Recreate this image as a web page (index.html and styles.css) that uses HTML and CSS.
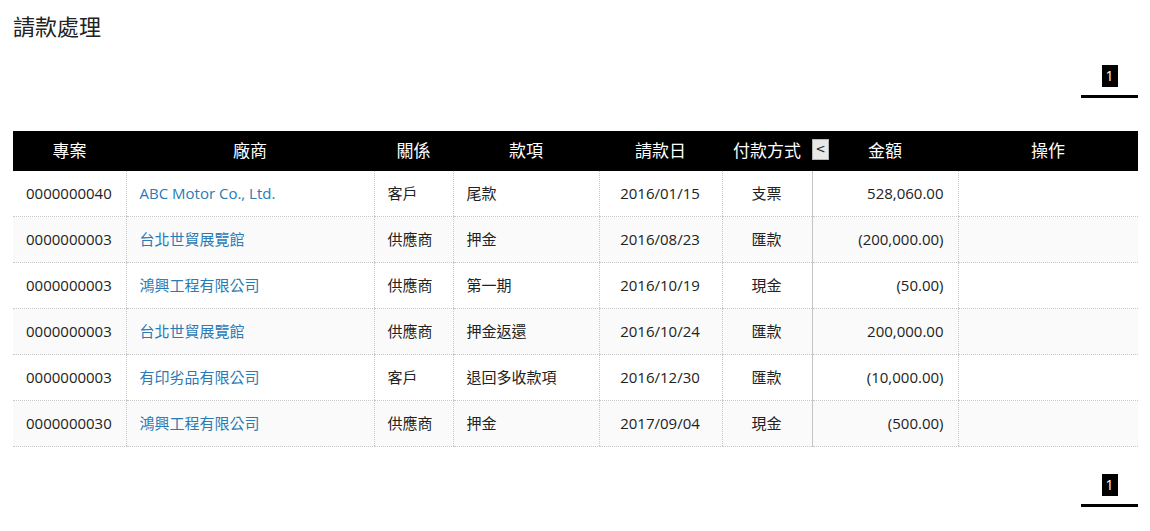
FILE: index.html
```html
<!DOCTYPE html>
<html lang="zh-Hant">
<head>
<meta charset="utf-8">
<title>請款處理</title>
<link rel="stylesheet" href="styles.css">
</head>
<body>
<h1 class="title">請款處理</h1>
<div class="pager-row"><div class="pager"><span class="page-num">1</span></div></div>
<table class="grid">
  <colgroup>
    <col class="c1"><col class="c2"><col class="c3"><col class="c4"><col class="c5"><col class="c6"><col class="c7"><col class="c8">
  </colgroup>
  <thead>
    <tr>
      <th>專案</th><th>廠商</th><th>關係</th><th>款項</th><th>請款日</th>
      <th class="th-pay">付款方式<span class="toggle">&lt;</span></th>
      <th>金額</th><th>操作</th>
    </tr>
  </thead>
  <tbody>
    <tr><td class="center">0000000040</td><td><a class="link">ABC Motor Co., Ltd.</a></td><td>客戶</td><td>尾款</td><td class="center">2016/01/15</td><td class="center">支票</td><td class="amt">528,060.00</td><td></td></tr>
    <tr><td class="center">0000000003</td><td><a class="link">台北世貿展覽館</a></td><td>供應商</td><td>押金</td><td class="center">2016/08/23</td><td class="center">匯款</td><td class="amt">(200,000.00)</td><td></td></tr>
    <tr><td class="center">0000000003</td><td><a class="link">鴻興工程有限公司</a></td><td>供應商</td><td>第一期</td><td class="center">2016/10/19</td><td class="center">現金</td><td class="amt">(50.00)</td><td></td></tr>
    <tr><td class="center">0000000003</td><td><a class="link">台北世貿展覽館</a></td><td>供應商</td><td>押金返還</td><td class="center">2016/10/24</td><td class="center">匯款</td><td class="amt">200,000.00</td><td></td></tr>
    <tr><td class="center">0000000003</td><td><a class="link">有印劣品有限公司</a></td><td>客戶</td><td>退回多收款項</td><td class="center">2016/12/30</td><td class="center">匯款</td><td class="amt">(10,000.00)</td><td></td></tr>
    <tr><td class="center">0000000030</td><td><a class="link">鴻興工程有限公司</a></td><td>供應商</td><td>押金</td><td class="center">2017/09/04</td><td class="center">現金</td><td class="amt">(500.00)</td><td></td></tr>
  </tbody>
</table>
<div class="pager-row bottom"><div class="pager"><span class="page-num">1</span></div></div>
</body>
</html>
```
FILE: styles.css
```css
html, body {
  margin: 0;
  padding: 0;
  background: #fff;
}
body {
  padding: 0 12px 0 13px;
  font-family: "Open Sans", "Noto Sans CJK TC", sans-serif;
  color: #222;
}
.title {
  margin: 0;
  padding-top: 10px;
  font-size: 22px;
  line-height: 30px;
  font-weight: normal;
  color: #222;
  font-family: "Noto Sans CJK TC", sans-serif;
}
.pager-row {
  display: flex;
  justify-content: flex-end;
  margin-top: 25px;
}
.pager-row.bottom {
  margin-top: 27px;
}
.pager {
  width: 57px;
  display: flex;
  justify-content: center;
  padding-bottom: 8px;
  border-bottom: 3px solid #000;
}
.page-num {
  display: block;
  width: 16px;
  height: 22px;
  line-height: 22px;
  background: #000;
  color: #fff;
  text-align: center;
  font-size: 14px;
}
.grid {
  margin-top: 33px;
  width: 1125px;
  border-collapse: collapse;
  table-layout: fixed;
  font-size: 15px;
}
.c1 { width: 113px; }
.c2 { width: 248px; }
.c3 { width: 79px; }
.c4 { width: 146px; }
.c5 { width: 123px; }
.c6 { width: 90px; }
.c7 { width: 146px; }
.c8 { width: 180px; }
.grid th {
  height: 38px;
  padding: 0 0 2px;
  line-height: 24px;
  background: #000;
  color: #fff;
  font-weight: normal;
  font-size: 17px;
  text-align: center;
  font-family: "Noto Sans CJK TC", sans-serif;
}
.th-pay {
  position: relative;
}
.toggle {
  position: absolute;
  left: 100%;
  top: 8px;
  width: 15px;
  height: 19px;
  line-height: 18px;
  background: #e8e8e8;
  border: 1px solid #b5b5b5;
  color: #222;
  font-size: 12px;
  font-family: "DejaVu Sans", sans-serif;
  text-align: center;
}
.grid td {
  height: 43px;
  padding: 0 14px 2px 13px;
  line-height: 20px;
  border-bottom: 1px dotted #c8c8c8;
  border-left: 1px dotted #c8c8c8;
  white-space: nowrap;
}
.grid td:first-child {
  border-left: none;
}
.grid td:nth-child(7) {
  border-left: 1px solid #c4c4c4;
}
.grid tbody tr:nth-child(even) td {
  background: #fafafa;
}
.center { text-align: center; }
.amt { text-align: right; }
.link {
  color: #2a7bb5;
  text-decoration: none;
}
```
